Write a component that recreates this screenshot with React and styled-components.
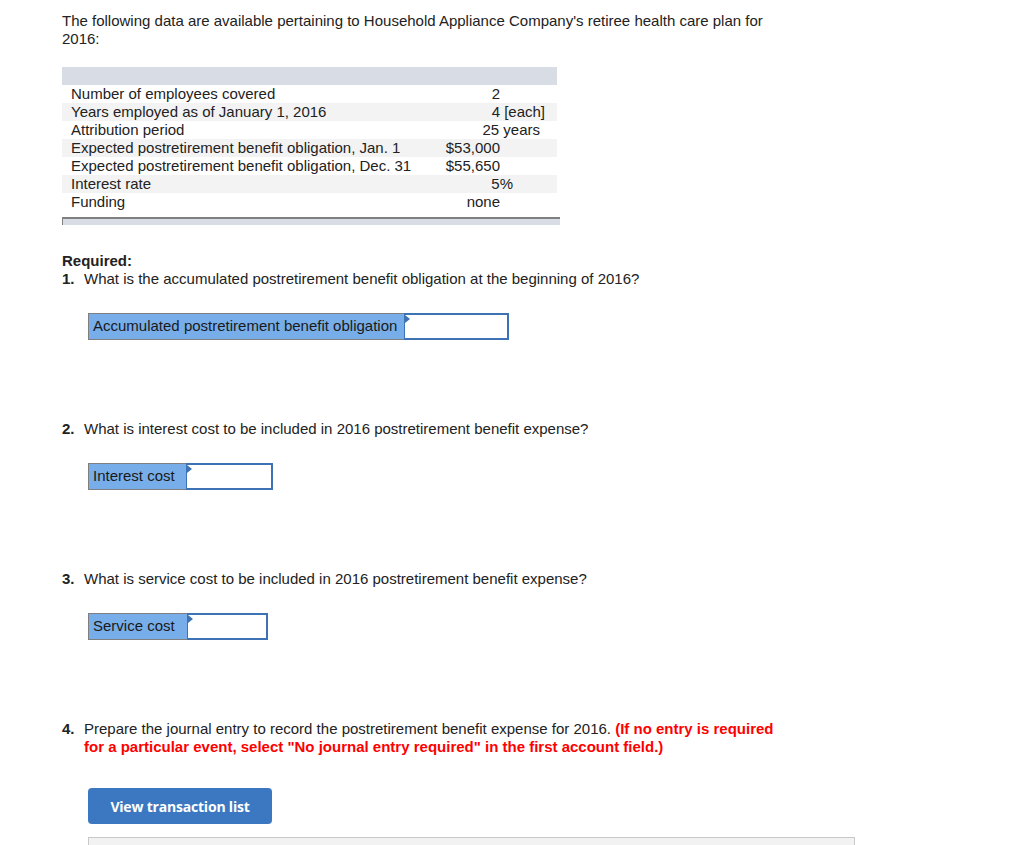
import React from "react";
import styled, { createGlobalStyle } from "styled-components";

const GlobalStyle = createGlobalStyle`
  body {
    margin: 0;
    background: #fff;
    font-family: "Liberation Sans", Arial, sans-serif;
    font-size: 15px;
    line-height: 18px;
    color: #222;
  }
`;

const Page = styled.div`
  padding: 12px 0 0 62px;
  width: 720px;
`;

const Intro = styled.p`
  margin: 0;
`;

const DataTable = styled.div`
  width: 495px;
  margin-top: 19px;
`;

const TableHead = styled.div`
  height: 18px;
  background: #d7dce5;
`;

const Row = styled.div`
  display: grid;
  grid-template-columns: 358px 137px;
  height: 18px;
  background: ${(p) => (p.$shade ? "#f3f3f3" : "#fff")};
`;

const Label = styled.div`
  padding-left: 9px;
  white-space: nowrap;
`;

const Value = styled.div`
  text-align: right;
  padding-right: ${(p) => p.$pad}px;
  white-space: nowrap;
`;

const TableFoot = styled.div`
  margin-top: 6px;
  width: 497px;
  height: 6px;
  border-top: 2px solid #808080;
  border-left: 1px solid #808080;
  background: #d7dce5;
`;

const Required = styled.div`
  margin-top: 27px;
  font-weight: bold;
`;

const Question = styled.div`
  display: flex;
`;

const Num = styled.span`
  font-weight: bold;
  width: 22px;
  flex-shrink: 0;
`;

const Warn = styled.strong`
  color: #f00;
`;

const AnswerRow = styled.div`
  display: flex;
  margin: 25px 0 80px 26px;
  height: 27px;
`;

const AnswerLabel = styled.div`
  box-sizing: border-box;
  width: ${(p) => p.$w}px;
  background: #77aee9;
  border: 1px solid #7f7f7f;
  border-right: none;
  padding: 3px 0 0 4px;
  color: #1a1a1a;
  white-space: nowrap;
`;

const AnswerInput = styled.div`
  box-sizing: border-box;
  width: ${(p) => p.$w}px;
  border: 2px solid #3d72b4;
  border-left-width: 1px;
  background: #fff;
  position: relative;

  &::before {
    content: "";
    position: absolute;
    top: 0;
    left: 0;
    border-top: 4px solid transparent;
    border-bottom: 4px solid transparent;
    border-left: 5px solid #3d72b4;
  }
`;

const Button = styled.button`
  display: block;
  margin: 32px 0 0 26px;
  width: 184px;
  height: 36px;
  border: none;
  border-radius: 4px;
  background: #3b78c1;
  color: #fff;
  font-family: "Open Sans", "Liberation Sans", sans-serif;
  font-weight: bold;
  font-size: 14px;
  letter-spacing: -0.2px;
  cursor: pointer;
`;

const ListBox = styled.div`
  margin: 13px 0 0 26px;
  width: 765px;
  height: 40px;
  border: 1px solid #c8c8c8;
  background: #f2f2f2;
`;

const rows = [
  ["Number of employees covered", "2", 57],
  ["Years employed as of January 1, 2016", "4 [each]", 12],
  ["Attribution period", "25 years", 17],
  ["Expected postretirement benefit obligation, Jan. 1", "$53,000", 57],
  ["Expected postretirement benefit obligation, Dec. 31", "$55,650", 57],
  ["Interest rate", "5%", 44],
  ["Funding", "none", 57],
];

const Answer = ({ label, labelWidth, width }) => (
  <AnswerRow>
    <AnswerLabel $w={labelWidth}>{label}</AnswerLabel>
    <AnswerInput $w={width} />
  </AnswerRow>
);

export default function App() {
  return (
    <Page>
      <GlobalStyle />
      <Intro>
        The following data are available pertaining to Household Appliance
        Company's retiree health care plan for 2016:
      </Intro>

      <DataTable>
        <TableHead />
        {rows.map(([label, value, pad], i) => (
          <Row key={label} $shade={i % 2 === 1}>
            <Label>{label}</Label>
            <Value $pad={pad}>{value}</Value>
          </Row>
        ))}
      </DataTable>
      <TableFoot />

      <Required>Required:</Required>
      <Question>
        <Num>1.</Num>
        <span>What is the accumulated postretirement benefit obligation at the beginning of 2016?</span>
      </Question>
      <Answer label="Accumulated postretirement benefit obligation" labelWidth={316} width={105} />

      <Question>
        <Num>2.</Num>
        <span>What is interest cost to be included in 2016 postretirement benefit expense?</span>
      </Question>
      <Answer label="Interest cost" labelWidth={98} width={87} />

      <Question>
        <Num>3.</Num>
        <span>What is service cost to be included in 2016 postretirement benefit expense?</span>
      </Question>
      <Answer label="Service cost" labelWidth={99} width={81} />

      <Question>
        <Num>4.</Num>
        <div>
          Prepare the journal entry to record the postretirement benefit expense for 2016.{" "}
          <Warn>(If no entry is required for a particular event, select "No journal entry required" in the first account field.)</Warn>
        </div>
      </Question>
      <Button>View transaction list</Button>
      <ListBox />
    </Page>
  );
}
